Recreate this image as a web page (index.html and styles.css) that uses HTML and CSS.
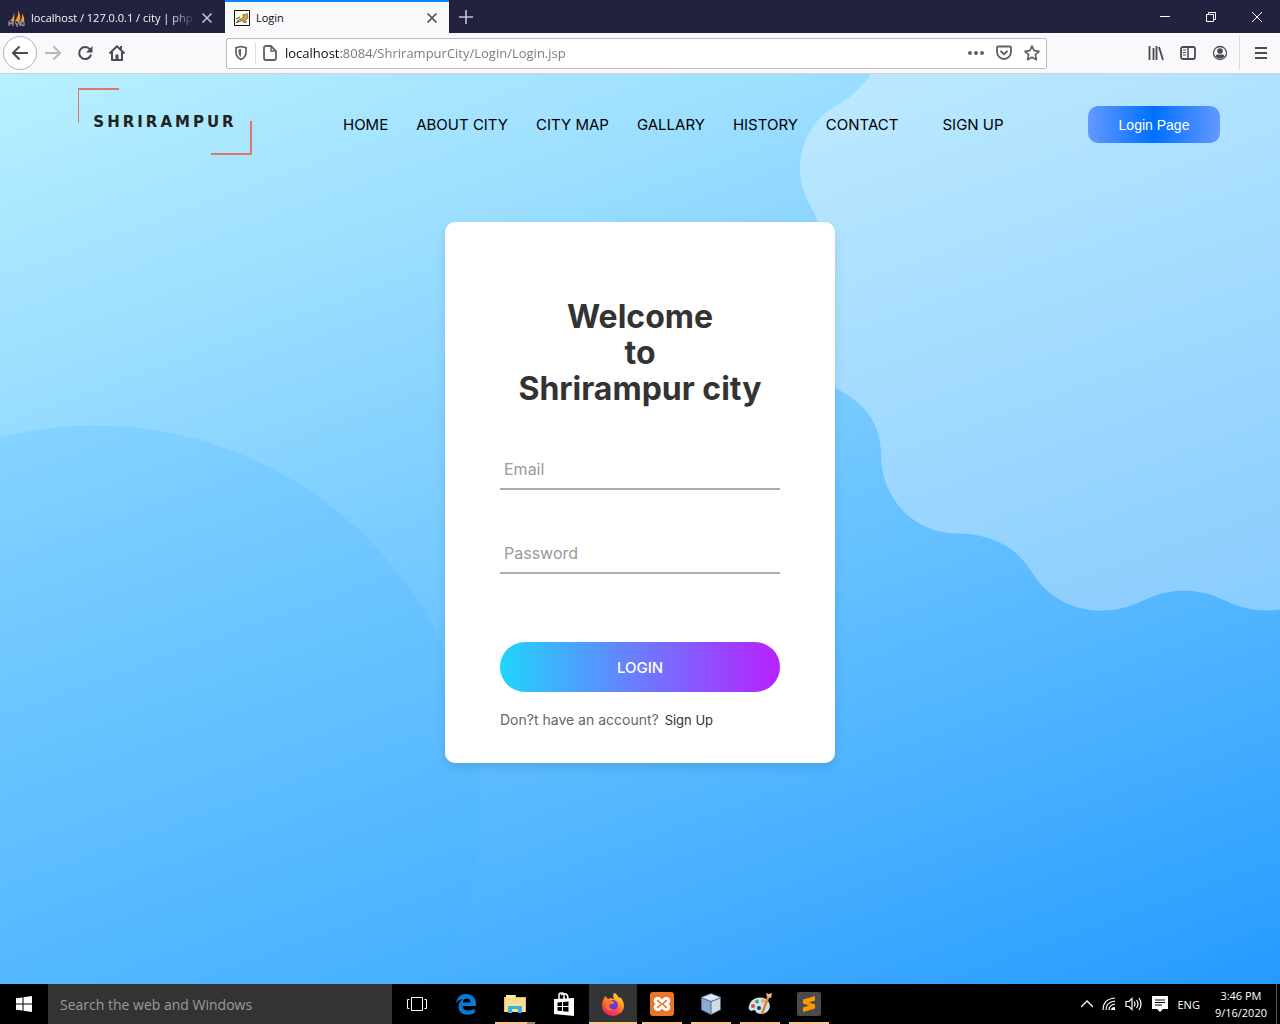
FILE: index.html
```html
<!DOCTYPE html>
<html lang="en">
<head>
<meta charset="utf-8">
<meta name="viewport" content="width=device-width, initial-scale=1">
<title>Login</title>
<link rel="stylesheet" href="styles.css">
</head>
<body>
<header class="browser">
  <div class="tabbar">
    <div class="tabs" role="tablist">
      <div class="tab">
        <svg class="fav" width="18" height="18" viewBox="0 0 18 18"><path d="M2 12Q6 8 6 3Q7 8 6 13ZM7 12Q11 7 10 1Q14 8 11 13ZM12 12Q15 9 14 4Q17 9 16 13Z" fill="#f59b25"/><path d="M1 17v-4l2 2 2-2v4M7 13l2 3 2-3M9 16v2M12 17v-4h2l-2 2 4 2M16 13v4" stroke="#9c9aae" stroke-width="1.2" fill="none"/></svg>
        <button class="tab-name fade" role="tab">localhost / 127.0.0.1 / city | php</button>
        <button class="close" aria-label="Close tab"><svg width="12" height="12" viewBox="0 0 12 12"><path d="M1.500 1.500l9 9M10.500 1.500l-9 9" stroke="#c3c3cf" stroke-width="1.600"/></svg></button>
      </div>
      <div class="tab active">
        <svg class="fav" width="16" height="16" viewBox="0 0 16 16"><path d="M.5.5h15v15H.5z" fill="#fffdf0" stroke="#111"/><path d="M3 11l3-2 3-1 0-4 2 1 2-2 1 5-2 2-2 1-3 0-3 1z" fill="#d2a446" stroke="#77602e" stroke-width=".7"/><path d="M2 9l4-2M2 12.500l3-1M9 12h4" stroke="#333"/></svg>
        <button class="tab-name" role="tab" aria-selected="true">Login</button>
        <button class="close" aria-label="Close tab"><svg width="12" height="12" viewBox="0 0 12 12"><path d="M1.500 1.500l9 9M10.500 1.500l-9 9" stroke="#4a4a4f" stroke-width="1.600"/></svg></button>
      </div>
      <button class="new-tab" aria-label="New tab"><svg width="14" height="14" viewBox="0 0 14 14"><path d="M7 0v14M0 7h14" stroke="#c3c3cf" stroke-width="1.600"/></svg></button>
    </div>
    <div class="window-buttons">
      <button aria-label="Minimize"><svg width="12" height="12" viewBox="0 0 12 12"><path d="M1 5.500h10" stroke="#fff"/></svg></button>
      <button aria-label="Restore"><svg width="12" height="12" viewBox="0 0 12 12"><path d="M1.500 3.500h7v7h-7zM3.500 3.500v-2h7v7h-2" stroke="#fff" fill="none"/></svg></button>
      <button aria-label="Close"><svg width="12" height="12" viewBox="0 0 12 12"><path d="M1 1l10 10M11 1L1 11" stroke="#fff"/></svg></button>
    </div>
  </div>
  <div class="toolbar">
    <div class="nav-buttons">
      <button class="back" aria-label="Back"><svg width="18" height="16" viewBox="0 0 18 16"><path d="M17 8H2M8.500 1.500L2 8l6.500 6.500" stroke="#4a4a4f" stroke-width="2" fill="none"/></svg></button>
      <button aria-label="Forward"><svg width="18" height="16" viewBox="0 0 18 16"><path d="M1 8h15M9.500 1.500L16 8l-6.500 6.500" stroke="#b8b8bb" stroke-width="2" fill="none"/></svg></button>
      <button aria-label="Reload"><svg width="16" height="16" viewBox="0 0 16 16"><path d="M13 4.500A6 6 0 1 0 14 9.500" stroke="#4a4a4f" stroke-width="2" fill="none"/><path d="M15.500 1v6.500H9z" fill="#4a4a4f"/></svg></button>
      <button aria-label="Home"><svg width="18" height="16" viewBox="0 0 18 16"><path d="M1.500 8.500L9 1.200l7.500 7.300M4 7v8h10V7" stroke="#4a4a4f" stroke-width="2" fill="none" stroke-linejoin="round"/><path d="M7.500 9.500h3V15h-3z" fill="#4a4a4f"/><path d="M12 1h2v3h-2z" fill="#4a4a4f"/></svg></button>
    </div>
    <div class="urlbar">
      <svg width="14" height="16" viewBox="0 0 14 16"><path d="M7 1.500l5 1.200v4.500c0 4-2.500 6-5 7.300C4.500 13.200 2 11.200 2 7.200V2.700z" fill="none" stroke="#616165" stroke-width="1.700"/><path d="M7 4v8C5.500 11 4.500 9.500 4.500 7V4.500z" fill="#616165"/></svg>
      <span class="rule"></span>
      <svg width="14" height="16" viewBox="0 0 14 16"><path d="M3 1h5l5 5v7q0 2-2 2H3q-2 0-2-2V3q0-2 2-2z" fill="none" stroke="#616165" stroke-width="1.800"/><path d="M8 1v5h5" fill="none" stroke="#616165" stroke-width="1.500"/></svg>
      <input class="url" type="text" aria-label="Address" value="localhost:8084/ShrirampurCity/Login/Login.jsp">
      <button aria-label="Page actions"><svg width="16" height="16" viewBox="0 0 16 16" fill="#616165"><circle cx="2" cy="8" r="2"/><circle cx="8" cy="8" r="2"/><circle cx="14" cy="8" r="2"/></svg></button>
      <button aria-label="Save to Pocket"><svg width="16" height="16" viewBox="0 0 16 16"><path d="M2 1.500h12q1 0 1 1V7a7 7 0 0 1-14 0V2.500q0-1 1-1z" fill="none" stroke="#616165" stroke-width="1.800"/><path d="M4.500 6L8 9.200 11.500 6" fill="none" stroke="#616165" stroke-width="2"/></svg></button>
      <button aria-label="Bookmark"><svg width="16" height="16" viewBox="0 0 16 16"><path d="M8 1l2.100 4.700 4.900.6-3.600 3.400 1 5L8 12.200l-4.400 2.500 1-5L1 6.300l4.900-.6z" fill="none" stroke="#616165" stroke-width="1.700" stroke-linejoin="round"/></svg></button>
    </div>
    <div class="tools">
      <button aria-label="Library"><svg width="16" height="16" viewBox="0 0 16 16"><path d="M1.500 1v14M5.500 3v12M8.500 1v14M11 2l4 13" stroke="#4a4a4f" stroke-width="1.800"/></svg></button>
      <button aria-label="Sidebars"><svg width="16" height="14" viewBox="0 0 16 14"><rect x="1" y="1" width="14" height="12" rx="2" fill="none" stroke="#4a4a4f" stroke-width="1.800"/><path d="M8 1v12" stroke="#4a4a4f" stroke-width="1.500"/><path d="M3 4h3M3 6.500h3M3 9h3" stroke="#4a4a4f"/></svg></button>
      <button aria-label="Account"><svg width="16" height="16" viewBox="0 0 16 16"><circle cx="8" cy="8" r="6.500" fill="none" stroke="#4a4a4f" stroke-width="1.300"/><circle cx="8" cy="6" r="2.800" fill="#4a4a4f"/><path d="M3.500 11.500q0-2 2-2h5q2 0 2 2Q11 13.500 8 13.500t-4.500-2z" fill="#4a4a4f"/></svg></button>
      <span class="rule tall"></span>
      <button aria-label="Menu"><svg width="12" height="14" viewBox="0 0 12 14"><path d="M0 2h12M0 7h12M0 12h12" stroke="#4a4a4f" stroke-width="2"/></svg></button>
    </div>
  </div>
</header>

<main class="site">
  <svg class="waves" viewBox="0 0 1280 911" preserveAspectRatio="xMidYMid slice" aria-hidden="true">
    <circle cx="95" cy="737" r="385" fill="#40b4ff" fill-opacity=".2"/>
    <path d="M871 0Q860 18 840 30C812 44 800 70 800 96C800 116 808 128 815 141Q821 156 822 180V308L834 314C864 328 881 350 881 381C881 427 916 460 957 460C989 460 1016 472 1032 499C1052 530 1080 537 1102 537C1118 537 1131 533 1143 527Q1184 507 1225 527Q1250 540 1280 536V0Z" fill="#fff" fill-opacity=".33"/>
  </svg>
  <div class="site-header">
    <a class="logo" href="#"><span>SHRIRAMPUR</span></a>
    <nav class="menu">
      <a href="#">HOME</a><a href="#">ABOUT CITY</a><a href="#">CITY MAP</a><a href="#">GALLARY</a><a href="#">HISTORY</a><a href="#">CONTACT</a><a class="join" href="#">SIGN UP</a>
    </nav>
    <button class="login-page">Login Page</button>
  </div>
  <form class="card">
    <h1>Welcome<br>to<br>Shrirampur city</h1>
    <input class="field" type="email" placeholder="Email" aria-label="Email">
    <input class="field" type="password" placeholder="Password" aria-label="Password">
    <button class="submit" type="button">LOGIN</button>
    <p class="signup">Don?t have an account? <a href="#">Sign Up</a></p>
  </form>
</main>

<footer class="taskbar">
  <button class="start" aria-label="Start"><svg width="16" height="16" viewBox="0 0 16 16" fill="#fff"><path d="M0 2.300l6.500-.9v6.100H0zM7.500 1.200L16 0v7.500H7.500zM0 8.500h6.500v6.100L0 13.700zM7.500 8.500H16V16l-8.500-1.200z"/></svg></button>
  <input class="search" type="text" placeholder="Search the web and Windows" aria-label="Search the web and Windows">
  <div class="apps">
    <button aria-label="Task view"><svg width="22" height="16" viewBox="0 0 22 16"><path d="M5.500 1.500h11v13h-11zM3.500 3.500h-2v9h2M18.500 3.500h2v9h-2" fill="none" stroke="#fff"/></svg></button>
    <button aria-label="Edge"><svg width="22" height="22" viewBox="0 0 22 22"><path d="M1 10C2 4 6 1 11 1c6 0 10 4 10 10v2H7.500c.3 3 2.500 4.500 5.800 4.500 2.500 0 4.700-.7 6.500-1.700v4C18 21 15.500 21.700 12.500 21.700 7 21.700 3.500 18.500 3.500 13.800c0-3.300 1.500-6 4.500-7.500C5 6.500 2.500 7.800 1 10zM7.700 9.500h7.800c0-2.500-1.300-4-3.700-4-2.300 0-3.700 1.500-4.100 4z" fill="#0a78d6"/></svg></button>
    <button class="open stacked" aria-label="File Explorer"><svg width="22" height="20" viewBox="0 0 22 20"><path d="M0 3h6l1-2h5v2h10v15H0z" fill="#e8bd5c"/><path d="M1 4h20v14H1z" fill="#f8df91"/><path d="M2 1h9v3H2z" fill="#fbe9a8"/><path d="M4 19v-7h14v7h-4v-4H8v4z" fill="#36b2e5"/></svg></button>
    <button aria-label="Store"><svg width="22" height="24" viewBox="0 0 22 24"><path d="M1 7l20-1v18L1 22z" fill="#fff"/><path d="M6 7V3q0-2 2-2h1q2 0 2 2v4M8 3q2-2 5-1 2 1 2 5" fill="none" stroke="#fff" stroke-width="1.500"/><path d="M4.500 10.500l4.500-.5v4H4.500zM10 10l5.500-.5V14H10zM4.500 15H9v4l-4.500-.3zM10 15h5.500v4.700l-5.500-.4z" fill="#000"/></svg></button>
    <button class="open current" aria-label="Firefox"><svg width="24" height="24" viewBox="0 0 24 24"><defs><linearGradient id="fx" x1=".8" y1="0" x2=".3" y2="1"><stop offset="0" stop-color="#ffe23c"/><stop offset=".4" stop-color="#ff9620"/><stop offset=".75" stop-color="#ff3c4c"/><stop offset="1" stop-color="#e8217d"/></linearGradient></defs><path d="M13 1c2 0 4 3 5 5l1-1c3 3 4 6 4 9a11 10 0 0 1-22 0C1 9 3 7 4 4l3 3 3-1 3 1c-1-2-1-4 0-6z" fill="url(#fx)"/><circle cx="12" cy="13" r="5" fill="#6a3cd2"/><path d="M5 9q4-2 8 1 1 2-2 2-3 0-3 2 1 4 5 3-5 4-9-2z" fill="#ff7a27"/></svg></button>
    <button class="open" aria-label="XAMPP"><svg width="24" height="24" viewBox="0 0 24 24"><rect width="24" height="24" rx="3" fill="#ee742a"/><path d="M7 6.500h2l3 3 3-3h2q2.500 1 1.500 3.500L16 12l2.500 2q1 2.500-1.500 3.500h-2l-3-3-3 3H7Q4.500 16.500 5.500 14L8 12 5.500 10Q4.500 7.500 7 6.500z" fill="none" stroke="#fff" stroke-width="3"/></svg></button>
    <button class="open" aria-label="NetBeans"><svg width="22" height="24" viewBox="0 0 22 24"><path d="M11 1l10 4v13l-10 5-10-5V5z" fill="#55669a"/><path d="M11 2l9 3.500-9 3.500-9-3.500z" fill="#dcebf4"/><path d="M2 6.500L10.500 10v12L2 17.500z" fill="#8fabd4"/><path d="M20 6.500L11.500 10v12l8.500-4.500z" fill="#cfdde0"/></svg></button>
    <button class="open" aria-label="Paint"><svg width="26" height="24" viewBox="0 0 26 24"><path d="M2 14C3 7 11 4 17 6c6 3 8 9 3 14-4 3-10 2-11 0-1-3-3-1-5-1-2-1-3-3-2-5z" fill="#cfe2ee"/><circle cx="6" cy="14" r="2" fill="#d94b3c"/><circle cx="10" cy="9.500" r="2" fill="#54a853"/><circle cx="16" cy="9" r="2" fill="#e8b040"/><circle cx="12" cy="16" r="2" fill="#233e62"/><path d="M22 3L15 22" stroke="#d6863a" stroke-width="2.500"/><path d="M19 1l3 1 3-1-1 5-4-1z" fill="#e9b88c"/></svg></button>
    <button class="open" aria-label="Sublime Text"><svg width="24" height="24" viewBox="0 0 24 24"><rect width="24" height="24" rx="2" fill="#4b4b4b"/><path d="M6 7.500L18 4v4.500l-6 2 6 2v4L6 20v-4.500l6-2-6-2z" fill="#ff9800"/></svg></button>
  </div>
  <div class="tray">
    <svg width="12" height="8" viewBox="0 0 12 8"><path d="M0 7l6-6 6 6" fill="none" stroke="#fff" stroke-width="1.300"/></svg>
    <svg width="14" height="14" viewBox="0 0 14 14"><path d="M1 13Q1 2 13 1M4 13Q4 5 13 4M7 13Q7 8 13 7" fill="none" stroke="#fff" stroke-width="1.200"/><path d="M9 13q0-3 4-3v3z" fill="#fff"/></svg>
    <svg width="18" height="14" viewBox="0 0 18 14"><path d="M1 4.500h3l3-3v11l-3-3H1zM9 4.500q2 2.500 0 5M11.500 3q3 4 0 8M14 1q4 6 0 12" fill="none" stroke="#fff" stroke-width="1.200"/></svg>
    <svg width="16" height="16" viewBox="0 0 16 16"><path d="M0 0h16v13h-5l-3 3-3-3H0z" fill="#fff"/><path d="M3 4h10M3 6.500h10M3 9h7" stroke="#000"/></svg>
    <span>ENG</span>
    <time class="clock">3:46 PM<br>9/16/2020</time>
  </div>
</footer>
</body>
</html>
```
FILE: styles.css
```css
* { box-sizing: border-box; }

body {
  margin: 0;
  min-height: 100vh;
  display: flex;
  flex-direction: column;
  font-family: "Open Sans", "Noto Sans", sans-serif;
  font-size: 11px;
}

button {
  padding: 0;
  border: 0;
  background: none;
  color: inherit;
  font: inherit;
}

a { color: inherit; text-decoration: none; }
svg { display: block; flex: none; }

/* Browser window */
.tabbar {
  display: flex;
  justify-content: space-between;
  height: 33px;
  background: #20223f;
}

.tabs { display: flex; }

.tab {
  display: flex;
  align-items: center;
  gap: 5px;
  width: 225px;
  padding: 2px 12px 0 8px;
  color: #f9f9fa;
}

.tab.active {
  gap: 6px;
  width: 224px;
  padding: 0 11px 0 9px;
  border-top: 2px solid #0a84ff;
  background: #f9f9fb;
  color: #0c0c0d;
}

.tab-name {
  flex: 1;
  white-space: nowrap;
  text-align: left;
}

.fade {
  -webkit-mask-image: linear-gradient(90deg, #000 84%, transparent);
  mask-image: linear-gradient(90deg, #000 84%, transparent);
}

.new-tab { width: 34px; display: grid; place-items: center; }

.window-buttons { display: flex; }
.window-buttons button { width: 46px; display: grid; place-items: center; }

.toolbar {
  display: flex;
  align-items: center;
  height: 41px;
  border-bottom: 1px solid #d2d2d6;
  background: #f9f9fb;
}

.nav-buttons { display: flex; align-items: center; width: 226px; padding-left: 3px; }
.nav-buttons button { width: 32px; height: 32px; display: grid; place-items: center; }
.nav-buttons .back { width: 34px; height: 34px; border: 1px solid #b4b4b8; border-radius: 50%; background: #fff; }

.urlbar {
  flex: 1;
  display: flex;
  align-items: center;
  gap: 8px;
  height: 31px;
  padding: 0 4px 0 7px;
  border: 1px solid #bcbcc0;
  border-radius: 2px;
  background: #fff;
}

.urlbar button { width: 20px; display: grid; place-items: center; }

.rule { width: 1px; height: 21px; margin: 0 -1px; background: #dcdce0; }
.rule.tall { height: 34px; margin: 0 5px 0 3px; }

.url {
  flex: 1;
  min-width: 0;
  padding: 0;
  border: 0;
  background: linear-gradient(90deg, #0c0c0d 55px, #77777b 55px);
  -webkit-background-clip: text;
  background-clip: text;
  color: transparent;
  font: 13px "Open Sans", "Noto Sans", sans-serif;
}

.tools { display: flex; align-items: center; width: 233px; padding-left: 93px; }
.tools button { width: 32px; display: grid; place-items: center; }

/* City site */
.site {
  position: relative;
  flex: 1;
  padding-bottom: 40px;
  background: linear-gradient(160deg, #b8f0ff 0%, #98dcff 25%, #70c7ff 50%, #4cb2ff 75%, #259bff 100%);
  font-family: Inter, sans-serif;
}

.waves { position: absolute; inset: 0; width: 100%; height: 100%; }

.site-header {
  position: relative;
  display: flex;
  align-items: center;
  padding: 14px 60px 0 78px;
}

.logo {
  display: grid;
  place-items: center;
  width: 174px;
  height: 67px;
  color: #222;
  font: 900 15px "DejaVu Sans", sans-serif;
  letter-spacing: 3px;
  background:
    linear-gradient(#e27468, #e27468) 0 0 / 41px 2px,
    linear-gradient(#e27468, #e27468) 0 0 / 1px 35px,
    linear-gradient(#e27468, #e27468) 100% 100% / 41px 2px,
    linear-gradient(#e27468, #e27468) 100% 100% / 2px 34px;
  background-repeat: no-repeat;
}

.menu {
  display: flex;
  gap: 28px;
  margin: 6px auto 0 91px;
  color: #000;
  font-size: 15px;
}

.join { margin-left: 16px; }

.login-page {
  width: 132px;
  height: 37px;
  margin-top: 6px;
  border-radius: 10px;
  background: linear-gradient(90deg, #6499ff, #0070ff 50%, #6499ff);
  color: #fff;
  font: 14px "Liberation Sans", Arial, sans-serif;
}

.card {
  position: relative;
  display: flex;
  flex-direction: column;
  width: 390px;
  margin: 67px auto 0;
  padding: 77px 55px 33px;
  border-radius: 10px;
  background: #fff;
  box-shadow: 0 5px 10px rgba(0, 0, 0, .1);
}

h1 {
  margin: 0 0 38px;
  color: #333;
  font-size: 32px;
  line-height: 36px;
  text-align: center;
}

.field {
  width: 100%;
  height: 45px;
  margin-bottom: 39px;
  padding: 4px 4px 0;
  border: 0;
  border-bottom: 2px solid #adadad;
  background: none;
  font: 16px Inter, sans-serif;
}

.field::placeholder { color: #999; }

.submit {
  height: 50px;
  margin-top: 29px;
  border-radius: 25px;
  background: linear-gradient(90deg, #21d4fd, #b721ff);
  color: #fff;
  font-size: 15px;
  font-weight: 500;
}

.signup { margin: 18px 0 0; color: #666; font-size: 14px; line-height: 20px; }
.signup a { margin-left: 2px; color: #333; font-size: 13px; }

/* Windows taskbar */
.taskbar {
  display: flex;
  height: 40px;
  background: #000;
  color: #fff;
}

.start { width: 48px; display: grid; place-items: center; }

.search {
  width: 344px;
  padding: 0 12px;
  border: 0;
  background: #333;
  font: 14px "Open Sans", "Noto Sans", sans-serif;
}

.search::placeholder { color: #9b9b9b; }

.apps { display: flex; gap: 1px; margin-left: 1px; }

.apps button {
  display: grid;
  place-items: center;
  width: 48px;
  background: linear-gradient(#fbc88f, #fbc88f) 50% 100% / 0 2px no-repeat;
}

.apps .open { background-size: 40px 2px; }
.apps .current { background-color: #343434; background-size: 48px 2px; }
.apps .stacked {
  background:
    linear-gradient(90deg, #fbc88f 32px, #a48463 32px) 50% 100% / 40px 2px no-repeat;
}

.tray {
  display: flex;
  align-items: center;
  gap: 9px;
  margin-left: auto;
  margin-right: 3px;
  padding-right: 9px;
  border-right: 1px solid #555;
}

.clock { margin-left: 6px; line-height: 17px; text-align: center; }
```
